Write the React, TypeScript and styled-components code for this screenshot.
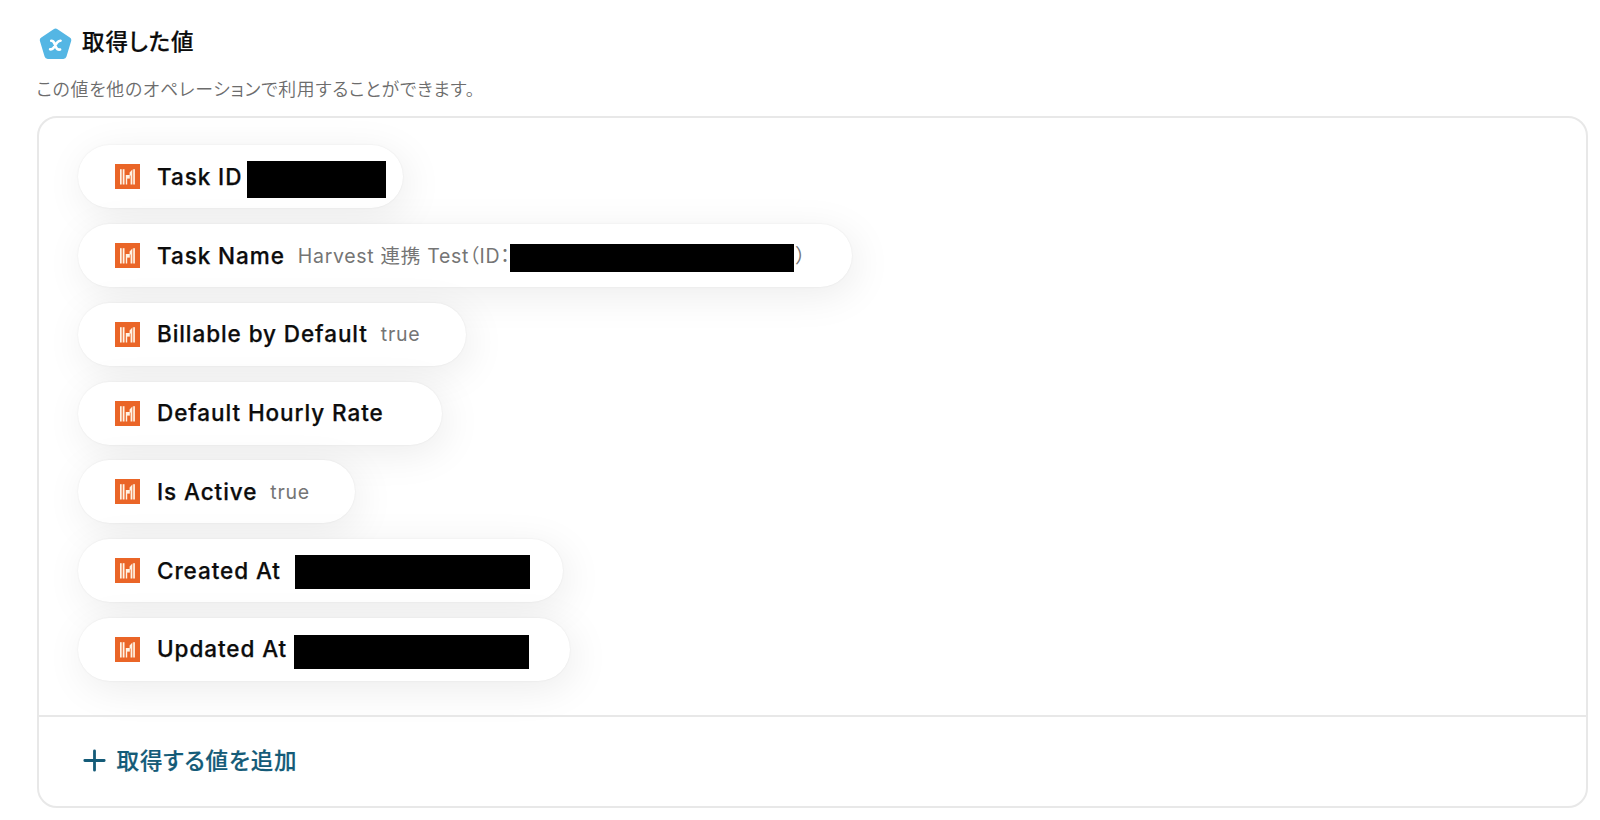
import React from 'react';
import styled, { createGlobalStyle } from 'styled-components';

const GlobalStyle = createGlobalStyle`
  * {
    box-sizing: border-box;
  }

  body {
    margin: 0;
    background: #fff;
    color: #0c0c0c;
    font-family: Inter, 'Noto Sans CJK JP', sans-serif;
    font-feature-settings: 'palt';
    letter-spacing: 0.04em;
  }
`;

const Page = styled.div`
  height: 820px;
  padding: 24px 12px 12px 36.5px;
  display: flex;
  flex-direction: column;
  overflow: hidden;
`;

const Header = styled.header`
  display: flex;
  align-items: center;
  height: 37px;
  gap: 10px;
  padding-left: 2.5px;

  svg {
    flex: none;
    margin-top: 2px;
  }
`;

const Title = styled.h2`
  margin: 0;
  padding-bottom: 2px;
  font-size: 22.5px;
  font-weight: 500;
  line-height: 34px;
  letter-spacing: 0.9px;
  white-space: nowrap;
  -webkit-text-stroke: 0.2px currentColor;
`;

const Description = styled.p`
  margin: 14.5px 0 13.5px;
  height: 27px;
  font-size: 17.9px;
  font-weight: 350;
  line-height: 27px;
  letter-spacing: 0.68px;
  color: #6c6c6c;
  white-space: nowrap;
`;

const Panel = styled.section`
  height: 692px;
  border: 2px solid #e8e8e8;
  border-radius: 20px;
  overflow: hidden;
  display: flex;
  flex-direction: column;
`;

const ValueList = styled.ul`
  flex: 1;
  margin: 0;
  padding: 27.4px 39.5px 0;
  list-style: none;
  display: flex;
  flex-direction: column;
  align-items: flex-start;
  gap: 15.75px;
`;

const ValuePill = styled.li<{ $width: number }>`
  width: ${props => props.$width}px;
  height: 63px;
  flex: none;
  padding-left: 37px;
  display: flex;
  align-items: center;
  border-radius: 32px;
  background: #fff;
  box-shadow: 0 0 2px rgba(0, 0, 0, 0.08), 4px 8px 40px rgba(0, 0, 0, 0.08);
  white-space: nowrap;

  svg {
    flex: none;
  }
`;

const Label = styled.span`
  margin-left: 17px;
  padding-bottom: 1px;
  font-size: 22.5px;
  font-weight: 500;
  letter-spacing: 0.92px;
  -webkit-text-stroke: 0.25px currentColor;
`;

const Value = styled.span`
  margin-left: 13px;
  font-size: 19.5px;
  line-height: 28px;
  letter-spacing: 0.7px;
  color: #757575;
`;

const Redaction = styled.span<{ $width: number; $height: number; $gap: number; $drop: number }>`
  flex: none;
  width: ${props => props.$width}px;
  height: ${props => props.$height}px;
  margin-left: ${props => props.$gap}px;
  margin-top: ${props => props.$drop}px;
  background: #000;
`;

const ClosingText = styled(Value)`
  margin-left: 2px;
`;

const Footer = styled.footer`
  flex: none;
  height: 91px;
  padding: 0 44px 2px;
  border-top: 2px solid #e8e8e8;
  display: flex;
  align-items: center;
`;

const AddButton = styled.button`
  display: flex;
  align-items: center;
  gap: 11px;
  padding: 0;
  border: 0;
  background: none;
  color: #145b78;
  font: inherit;
  font-feature-settings: inherit;
  font-size: 22.5px;
  font-weight: 500;
  line-height: 32px;
  letter-spacing: 0.9px;
  cursor: pointer;
`;

const AddLabel = styled.span`
  -webkit-text-stroke: 0.2px currentColor;
`;

const HarvestIcon: React.FC = () => (
  <svg width="25" height="25" viewBox="0 0 25 25">
    <rect width="25" height="25" fill="#ea6527" />
    <g fill="#fff3e4">
      <rect x="5" y="5.2" width="1.7" height="15.3" />
      <rect x="7.7" y="5.2" width="1.8" height="15.3" />
      <rect x="10.8" y="11" width="1.4" height="9.5" />
      <rect x="12" y="11" width="2.8" height="3.6" />
      <path d="M14.6 8.6 17.4 5.600v14.900h-1.800v-9h-1z" />
      <rect x="18.2" y="5.2" width="1.7" height="15.3" />
    </g>
  </svg>
);

const VariableIcon: React.FC = () => (
  <svg width="33" height="32" viewBox="0 0 33 32">
    <path
      d="M14.6 1.2a3.4 3.4 0 0 1 3.9 0l12.3 8.4a3.2 3.2 0 0 1 1.3 3.7l-4.6 15.2a3.4 3.4 0 0 1-3.2 2.5H8.8a3.4 3.4 0 0 1-3.2-2.5L1 13.3a3.2 3.2 0 0 1 1.3-3.7z"
      fill="#54b6e4"
    />
    <path
      d="M12.2 12.8c1.400-.2 2.300.5 3.100 2.400l1.900 4.200c.8 1.900 1.900 2.500 3.900 2.100M21.600 12.700c-1.800-.2-2.600.6-3.700 2.100l-2.900 4.400c-1.200 1.800-2.200 2.500-3.900 2.100"
      fill="none"
      stroke="#fff"
      strokeWidth="2.6"
      strokeLinecap="round"
    />
  </svg>
);

interface FetchedValue {
  label: string;
  width: number;
  value?: string;
  closing?: string;
  redaction?: { width: number; height: number; gap: number; drop: number };
}

const FETCHED_VALUES: FetchedValue[] = [
  { label: 'Task ID', width: 324.5, redaction: { width: 139, height: 37, gap: 5, drop: 6 } },
  {
    label: 'Task Name',
    width: 773.5,
    value: 'Harvest 連携 Test（ID：',
    closing: '）',
    redaction: { width: 284, height: 28, gap: -1, drop: 5 },
  },
  { label: 'Billable by Default', width: 387.5, value: 'true' },
  { label: 'Default Hourly Rate', width: 364 },
  { label: 'Is Active', width: 277, value: 'true' },
  { label: 'Created At', width: 485, redaction: { width: 235, height: 34, gap: 14, drop: 3 } },
  { label: 'Updated At', width: 491.5, redaction: { width: 235, height: 34, gap: 7, drop: 5.5 } },
];

const App: React.FC = () => {
  return (
    <>
      <GlobalStyle />
      <Page>
        <Header>
          <VariableIcon />
          <Title>取得した値</Title>
        </Header>
        <Description>この値を他のオペレーションで利用することができます。</Description>

        <Panel>
          <ValueList>
            {FETCHED_VALUES.map(item => (
              <ValuePill key={item.label} $width={item.width}>
                <HarvestIcon />
                <Label>{item.label}</Label>
                {item.value && <Value>{item.value}</Value>}
                {item.redaction && (
                  <Redaction
                    $width={item.redaction.width}
                    $height={item.redaction.height}
                    $gap={item.redaction.gap}
                    $drop={item.redaction.drop}
                  />
                )}
                {item.closing && <ClosingText>{item.closing}</ClosingText>}
              </ValuePill>
            ))}
          </ValueList>

          <Footer>
            <AddButton>
              <svg width="23" height="23" viewBox="0 0 23 23">
                <path
                  d="M11.5 1.8v19.4M1.8 11.5h19.4"
                  stroke="currentColor"
                  strokeWidth="2.8"
                  strokeLinecap="round"
                />
              </svg>
              <AddLabel>取得する値を追加</AddLabel>
            </AddButton>
          </Footer>
        </Panel>
      </Page>
    </>
  );
};

export default App;
